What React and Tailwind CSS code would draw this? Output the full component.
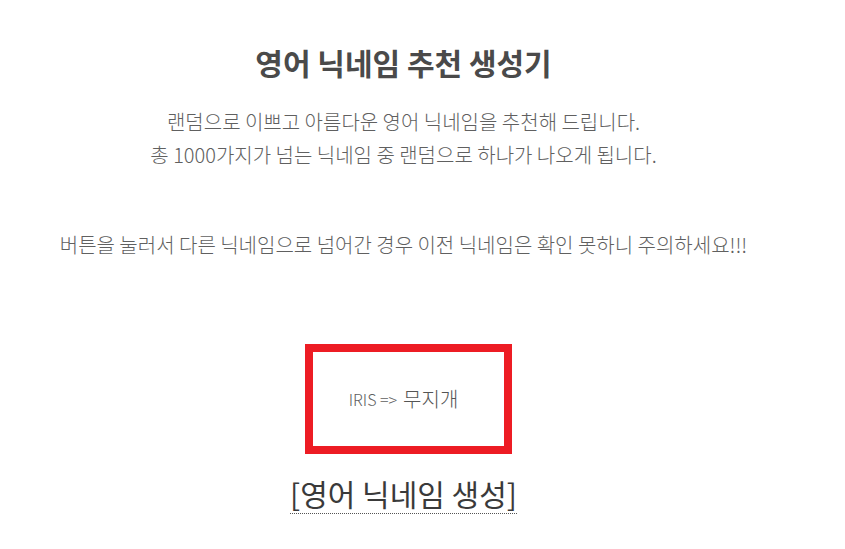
export default function App() {
  const font = { fontFamily: '"Noto Sans CJK KR", "Noto Sans", sans-serif' };
  return (
    <div className="w-[845px] h-[549px] bg-white overflow-hidden" style={font}>
      <div className="w-[807px] flex flex-col items-center text-center">
        <h1 className="mt-[40px] text-[30px] leading-[44px] font-bold text-[#4a4a4a]">영어 닉네임 추천 생성기</h1>
        <div className="mt-[21px] text-[20px] leading-[33px] text-[#606060] font-light">
          <p>랜덤으로 이쁘고 아름다운 영어 닉네임을 추천해 드립니다.</p>
          <p>총 1000가지가 넘는 닉네임 중 랜덤으로 하나가 나오게 됩니다.</p>
        </div>
        <p className="mt-[57px] text-[20px] leading-[33px] text-[#606060] font-light">
          버튼을 눌러서 다른 닉네임으로 넘어간 경우 이전 닉네임은 확인 못하니 주의하세요!!!
        </p>
        <div className="mt-[83px] w-full flex justify-center pl-[10px]">
          <div className="w-[207px] h-[110px] border-[8px] border-[#ed1c24] flex items-center justify-center pr-[10px]">
            <span className="text-[16px] text-[#606060] font-light">IRIS =&gt;</span>
            <span className="ml-[6px] text-[20px] text-[#555555] font-light">무지개</span>
          </div>
        </div>
        <div className="mt-[20px]">
          <span className="text-[30px] leading-[39px] text-[#3a3a3a] border-b border-dotted border-[#555555] inline-block">[영어 닉네임 생성]</span>
        </div>
      </div>
    </div>
  );
}
